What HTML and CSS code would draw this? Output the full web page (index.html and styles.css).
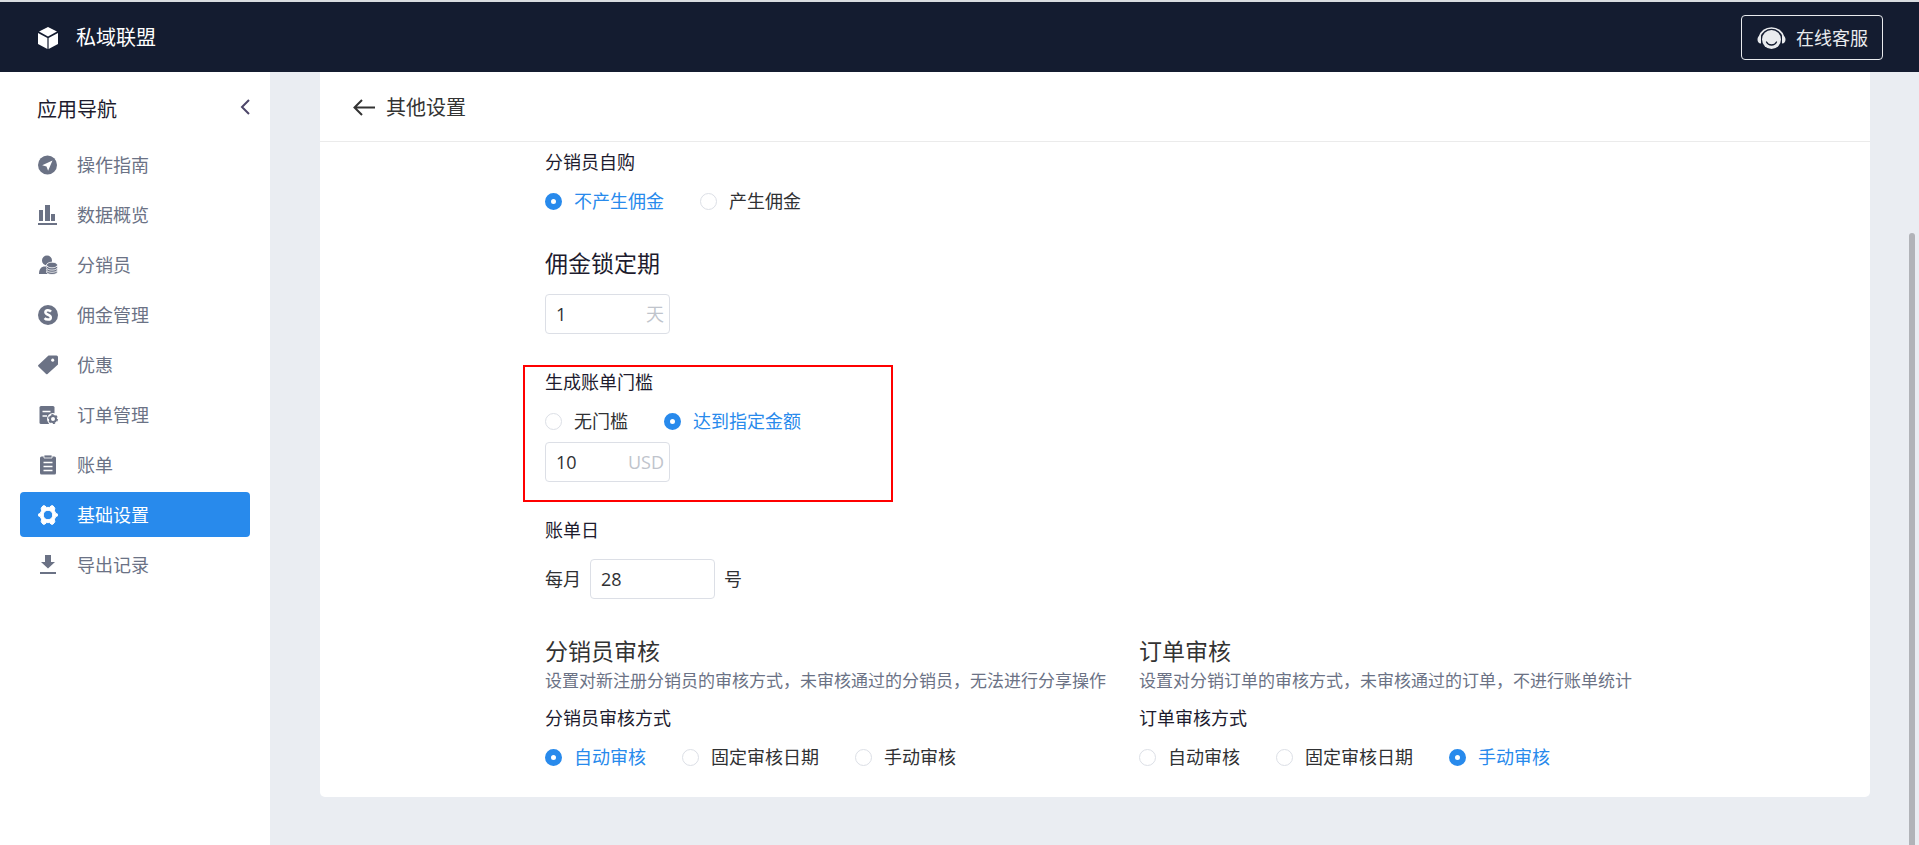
FILE: index.html
```html
<!DOCTYPE html>
<html lang="zh-CN">
<head>
<meta charset="utf-8">
<title>私域联盟</title>
<link rel="stylesheet" href="styles.css">
</head>
<body>
<header class="topbar">
  <div class="brand">
    <svg class="icon" viewBox="0 0 20 22" aria-hidden="true"><path fill="#fff" d="M10 0l9 4.600L10 9.600 1 4.600zM0 6l9.400 5.100V22L0 17zM20 6l-9.400 5.100V22L20 17z"/></svg>
    <span>私域联盟</span>
  </div>
  <button class="service" type="button">
    <svg class="service-icon" viewBox="0 0 29 24" aria-hidden="true">
      <circle cx="14.500" cy="13.500" r="9.500" fill="#e9ebee"/>
      <path d="M2.500 11a12.300 11.500 0 0 1 24 0" fill="none" stroke="#e9ebee" stroke-width="1.700"/>
      <path d="M4 9.500v8C1.500 17.500.5 15.500.5 13.500S1.500 9.500 4 9.500zM25 9.500v8c2.500 0 3.500-2 3.500-4s-1-4-3.500-4z" fill="#e9ebee"/>
      <path d="M9.500 16c2 4 8 4 10 0" fill="none" stroke="#141c30" stroke-width="1.300" stroke-linecap="round"/>
    </svg>
    <span>在线客服</span>
  </button>
</header>
<div class="layout">
  <aside class="sidebar">
    <div class="sidebar-head">
      <h2 class="sidebar-title">应用导航</h2>
      <button class="collapse" type="button" aria-label="收起">
        <svg viewBox="0 0 10 16" width="10" height="16" aria-hidden="true"><path d="M9 1L2 8l7 7" fill="none" stroke="#4d4669" stroke-width="2"/></svg>
      </button>
    </div>
    <nav class="nav">
      <a class="nav-item" href="#guide"><svg class="icon" viewBox="0 0 20 20" aria-hidden="true"><circle cx="9.500" cy="10" r="9.500" fill="currentColor"/><path d="M14.500 5.500L4.200 10.200l4.300 1.300 1.600 4.300z" fill="#fff"/></svg><span>操作指南</span></a>
      <a class="nav-item" href="#data"><svg class="icon" viewBox="0 0 20 20" aria-hidden="true"><path d="M1 5h4v11H1zM7 0h5v16H7zM13 9h4v7h-4zM0 18h19v2H0z" fill="currentColor"/></svg><span>数据概览</span></a>
      <a class="nav-item" href="#members"><svg class="icon" viewBox="0 0 20 20" aria-hidden="true"><circle cx="9" cy="5.500" r="5" fill="currentColor"/><path d="M1 19c0-5 2-7.500 6-7.500h3V19z" fill="currentColor"/><g fill="currentColor" stroke="#fff" stroke-width=".8"><ellipse cx="14" cy="17" rx="5.500" ry="2.500"/><ellipse cx="14" cy="14.800" rx="5.500" ry="2.500"/><ellipse cx="14" cy="12.600" rx="5.500" ry="2.500"/><ellipse cx="14" cy="10" rx="5.500" ry="2.800"/></g></svg><span>分销员</span></a>
      <a class="nav-item" href="#commission"><svg class="icon" viewBox="0 0 20 20" aria-hidden="true"><circle cx="10" cy="10" r="10" fill="currentColor"/><path d="M13 6.600C11.500 4.800 7.400 4.600 7.400 7.300c0 2.900 5.400 2 5.400 5.100 0 2.900-4.600 2.700-6.200.7" fill="none" stroke="#fff" stroke-width="2.500"/></svg><span>佣金管理</span></a>
      <a class="nav-item" href="#coupon"><svg class="icon" viewBox="0 0 20 20" aria-hidden="true"><path fill="currentColor" fill-rule="evenodd" d="M10.500.5H18.500a1.500 1.500 0 0 1 1.500 1.500v7.500L9.500 19a1 1 0 0 1-1.400 0L.4 11.500a1 1 0 0 1 0-1.400zM14.700 3.600a1.600 1.600 0 1 0 .01 0z"/></svg><span>优惠</span></a>
      <a class="nav-item" href="#orders"><svg class="icon" viewBox="0 0 20 20" aria-hidden="true"><rect x="1.500" y="1" width="15" height="18" rx="1.500" fill="currentColor"/><path d="M4.500 6.500h8M4.500 11h4.500" stroke="#fff" stroke-width="1.500"/><circle cx="15" cy="14" r="6" fill="#fff"/><circle cx="15" cy="14" r="3" fill="none" stroke="currentColor" stroke-width="2"/><circle cx="15" cy="14" r="4.300" fill="none" stroke="currentColor" stroke-width="1.300" stroke-dasharray="2.250 2.250"/></svg><span>订单管理</span></a>
      <a class="nav-item" href="#bills"><svg class="icon" viewBox="0 0 20 20" aria-hidden="true"><path d="M3.500 1.500h13A1.500 1.500 0 0 1 18 3v15a1.500 1.500 0 0 1-1.500 1.500h-13A1.500 1.500 0 0 1 2 18V3a1.500 1.500 0 0 1 1.500-1.500z" fill="currentColor"/><path d="M6 0h8v3H6z" fill="currentColor" stroke="#fff" stroke-width=".8"/><path d="M5.500 7.500h9M5.500 11.500h9M5.500 15.500h9" stroke="#fff" stroke-width="1.300"/></svg><span>账单</span></a>
      <a class="nav-item nav-item-active" href="#settings" aria-current="page"><svg class="icon" viewBox="0 0 20 20" aria-hidden="true"><path fill="currentColor" stroke="currentColor" stroke-width="1" stroke-linejoin="round" fill-rule="evenodd" d="M5 .8h1.800L8.500 2.400h3L13.200.8H15l1.800 2.400-.4 2.600 1.400 2.600 1.900.8v1.600l-1.900.8-1.400 2.600.4 2.600L15 19.200h-1.800l-1.700-1.600h-3l-1.700 1.600H5l-1.800-2.400.4-2.600-1.400-2.600-1.900-.8V9.200l1.900-.8 1.400-2.600-.4-2.600zM10 5.300a4.700 4.700 0 1 0 .01 0z"/></svg><span>基础设置</span></a>
      <a class="nav-item" href="#export"><svg class="icon" viewBox="0 0 20 20" aria-hidden="true"><path d="M7 0h6v7h4l-7 6.500L3 7h4zM2 17h16v2H2z" fill="currentColor"/></svg><span>导出记录</span></a>
    </nav>
  </aside>
  <main class="main">
    <section class="panel">
      <div class="panel-head">
        <a class="back" href="#back" aria-label="返回"><svg viewBox="0 0 22 18" width="22" height="18" aria-hidden="true"><path d="M9 1L1.500 8.500 9 16M2 8.500h20" fill="none" stroke="#333" stroke-width="2"/></svg></a>
        <h1 class="panel-title">其他设置</h1>
      </div>
      <form class="form">
        <fieldset>
          <legend class="label">分销员自购</legend>
          <div class="radios">
            <label class="radio"><input type="radio" name="self" checked><span>不产生佣金</span></label>
            <label class="radio"><input type="radio" name="self"><span>产生佣金</span></label>
          </div>
        </fieldset>
        <div class="group">
          <label class="heading heading-dark" for="lock">佣金锁定期</label>
          <div class="box"><input class="box-input" id="lock" type="text" value="1"><span class="suffix">天</span></div>
        </div>
        <div class="marked">
          <fieldset class="group">
            <legend class="label">生成账单门槛</legend>
            <div class="radios">
              <label class="radio"><input type="radio" name="limit"><span>无门槛</span></label>
              <label class="radio"><input type="radio" name="limit" checked><span>达到指定金额</span></label>
            </div>
            <div class="box box-amount"><input class="box-input" type="text" value="10" aria-label="指定金额"><span class="suffix">USD</span></div>
          </fieldset>
        </div>
        <div>
          <label class="label" for="day">账单日</label>
          <div class="day"><span>每月</span><div class="box"><input class="box-input" id="day" type="text" value="28"></div><span>号</span></div>
        </div>
        <div class="reviews">
          <section>
            <h2 class="heading">分销员审核</h2>
            <p class="desc">设置对新注册分销员的审核方式，未审核通过的分销员，无法进行分享操作</p>
            <fieldset>
              <legend class="label">分销员审核方式</legend>
              <div class="radios">
                <label class="radio"><input type="radio" name="member" checked><span>自动审核</span></label>
                <label class="radio"><input type="radio" name="member"><span>固定审核日期</span></label>
                <label class="radio"><input type="radio" name="member"><span>手动审核</span></label>
              </div>
            </fieldset>
          </section>
          <section>
            <h2 class="heading">订单审核</h2>
            <p class="desc">设置对分销订单的审核方式，未审核通过的订单，不进行账单统计</p>
            <fieldset>
              <legend class="label">订单审核方式</legend>
              <div class="radios">
                <label class="radio"><input type="radio" name="order"><span>自动审核</span></label>
                <label class="radio"><input type="radio" name="order"><span>固定审核日期</span></label>
                <label class="radio"><input type="radio" name="order" checked><span>手动审核</span></label>
              </div>
            </fieldset>
          </section>
        </div>
      </form>
    </section>
    <div class="scroll-thumb"></div>
  </main>
</div>
</body>
</html>
```
FILE: styles.css
```css
*, *::after { box-sizing: border-box; }
body {
  margin: 0;
  min-height: 100vh;
  display: flex;
  flex-direction: column;
  font: 18px/24px "Open Sans", "Noto Sans CJK SC", sans-serif;
  color: #303133;
  background: #eaedf2;
}
h1, h2, p, fieldset, legend { margin: 0; padding: 0; border: 0; font-weight: 400; }
fieldset { min-width: 0; }
a { color: inherit; text-decoration: none; }
button, input { font: inherit; color: inherit; }
svg { display: block; flex: none; }

.topbar {
  display: flex;
  align-items: center;
  justify-content: space-between;
  height: 72px;
  padding: 1px 36px 0 38px;
  border-top: 2px solid #d9dce0;
  background: #141c30;
  color: #fff;
}
.brand { display: flex; align-items: center; gap: 18px; font-size: 20px; }
.icon { width: 20px; height: 20px; }
.brand .icon { height: 22px; }
.service {
  display: flex;
  align-items: center;
  gap: 10px;
  height: 45px;
  padding: 0 14px 0 15px;
  border: 1px solid #e9ebee;
  border-radius: 4px;
  background: none;
  color: #e9ebee;
}
.service-icon { width: 29px; height: 24px; }

.layout { flex: 1; display: flex; }
.sidebar { width: 270px; flex: none; padding: 0 20px; background: #fff; }
.sidebar-head { display: flex; align-items: center; justify-content: space-between; height: 70px; padding: 6px 0 0 17px; }
.sidebar-title { font-size: 20px; color: #1d1b2e; }
.collapse { padding: 0; margin-bottom: 6px; border: 0; background: none; }
.nav { display: flex; flex-direction: column; gap: 5px; }
.nav-item {
  display: flex;
  align-items: center;
  gap: 19px;
  height: 45px;
  padding: 0 18px;
  border-radius: 4px;
  color: #6b7285;
}
.nav-item-active { background: #288aec; color: #fff; }

.main { position: relative; flex: 1; min-width: 0; padding: 0 49px 40px 50px; }
.panel { background: #fff; border-radius: 0 0 5px 5px; }
.panel-head {
  display: flex;
  align-items: center;
  gap: 11px;
  height: 70px;
  padding: 2px 33px 0;
  border-bottom: 1px solid #ebebeb;
}
.panel-title { font-size: 20px; color: #333; }

.form { max-width: 1550px; padding: 8px 225px 28px; display: flex; flex-direction: column; gap: 36px; }
.label { display: block; color: #1d1b2e; }
.heading { display: block; font-size: 23px; line-height: 28px; color: #333; }
.heading-dark { color: #1d1b2e; }
.radios { display: flex; gap: 36px; margin-top: 15px; }
.radio { display: flex; align-items: center; gap: 12px; white-space: nowrap; }
.radio input {
  appearance: none;
  width: 17px;
  height: 17px;
  margin: 0;
  border: 1px solid #dcdfe6;
  border-radius: 50%;
  background: #fff;
}
.radio input:checked { border: 6px solid #288aec; }
.radio input:checked + span { color: #288aec; }
.box {
  display: flex;
  align-items: center;
  width: 125px;
  height: 40px;
  padding: 0 5px 0 10px;
  border: 1px solid #dcdfe6;
  border-radius: 4px;
  background: #fff;
}
.group > .box { margin-top: 17px; }
.group > .box-amount { margin-top: 9px; }
.box-input { flex: 1; min-width: 0; width: 0; padding: 0; border: 0; outline: 0; background: none; }
.suffix { color: #c0c4cc; }
.marked { position: relative; }
.marked::after {
  content: "";
  position: absolute;
  top: -5px;
  left: -22px;
  width: 370px;
  bottom: -20px;
  border: 2px solid #f00;
  pointer-events: none;
}
.day { display: flex; align-items: center; gap: 9px; margin-top: 17px; }
.reviews { display: grid; grid-template-columns: 54% 46%; margin-top: 2px; }
.desc { margin: 4px 0 13px; font-size: 17px; color: #6b7285; white-space: nowrap; }

.scroll-thumb {
  position: absolute;
  top: 161px;
  right: 4px;
  bottom: 0;
  width: 6px;
  border-radius: 3px 3px 0 0;
  background: #b1b3b8;
}
```
